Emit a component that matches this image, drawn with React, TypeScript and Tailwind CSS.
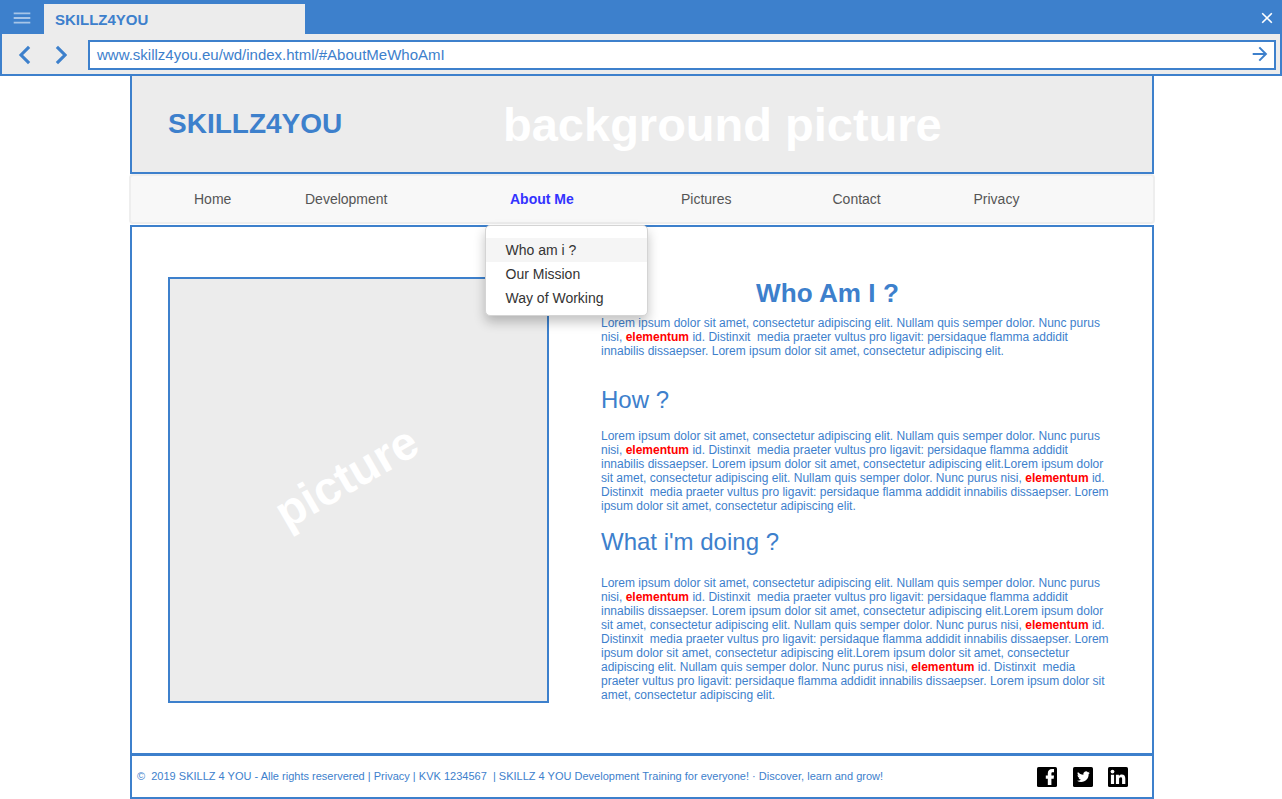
import React from "react";

const NAV = [
  { label: "Home", width: "w-[111px]" },
  { label: "Development", width: "w-[205px]" },
  { label: "About Me", width: "w-[171px]", active: true },
  { label: "Pictures", width: "w-[151.500px]" },
  { label: "Contact", width: "w-[141px]" },
  { label: "Privacy", width: "w-[100px]" },
];

const MENU = ["Who am i ?", "Our Mission", "Way of Working"];

const INTRO = [
  "Lorem ipsum dolor sit amet, consectetur adipiscing elit. Nullam quis semper dolor. Nunc purus",
  "nisi, *elementum* id. Distinxit  media praeter vultus pro ligavit: persidaque flamma addidit",
  "innabilis dissaepser. Lorem ipsum dolor sit amet, consectetur adipiscing elit.",
];

const HOW = [
  "Lorem ipsum dolor sit amet, consectetur adipiscing elit. Nullam quis semper dolor. Nunc purus",
  "nisi, *elementum* id. Distinxit  media praeter vultus pro ligavit: persidaque flamma addidit",
  "innabilis dissaepser. Lorem ipsum dolor sit amet, consectetur adipiscing elit.Lorem ipsum dolor",
  "sit amet, consectetur adipiscing elit. Nullam quis semper dolor. Nunc purus nisi, *elementum* id.",
  "Distinxit  media praeter vultus pro ligavit: persidaque flamma addidit innabilis dissaepser. Lorem",
  "ipsum dolor sit amet, consectetur adipiscing elit.",
];

const DOING = [
  ...HOW.slice(0, 5),
  "ipsum dolor sit amet, consectetur adipiscing elit.Lorem ipsum dolor sit amet, consectetur",
  "adipiscing elit. Nullam quis semper dolor. Nunc purus nisi, *elementum* id. Distinxit  media",
  "praeter vultus pro ligavit: persidaque flamma addidit innabilis dissaepser. Lorem ipsum dolor sit",
  "amet, consectetur adipiscing elit.",
];

function Paragraph({ lines }: { lines: string[] }) {
  return (
    <p className="whitespace-pre text-[12px] leading-[14px]">
      {lines.map((line, i) => (
        <span key={i} className="block">
          {line.split("*").map((part, j) =>
            j % 2 ? (
              <b key={j} className="font-bold text-[#ff0000]">{part}</b>
            ) : (
              <React.Fragment key={j}>{part}</React.Fragment>
            )
          )}
        </span>
      ))}
    </p>
  );
}

function BrowserBar() {
  return (
    <header className="h-[76px] bg-[#3d80cc]">
      <div className="flex h-[34px] items-end">
        <svg className="mb-[9px] ml-[13px] h-[14px] w-[18px]" viewBox="0 0 18 14" stroke="#a7c5e8" strokeWidth="1.8">
          <path d="M.7 2.4h16.6M.7 7h16.6M.7 11.6h16.6" />
        </svg>
        <div className="ml-[13px] h-[30px] w-[261px] bg-[#ececec] pl-[11px] text-[15px] leading-[32px] font-bold">
          SKILLZ4YOU
        </div>
        <svg className="mr-[9px] mb-[10px] ml-auto h-3 w-3" viewBox="0 0 12 12" fill="none" stroke="#fff" strokeWidth="1.6">
          <path d="M1.2 1.2l9.6 9.6M10.8 1.2l-9.6 9.6" />
        </svg>
      </div>
      <div className="mx-[2px] flex h-[40px] items-center bg-[#ececec] pt-[2px]">
        <svg className="ml-[16px] h-[20px] w-[13px]" viewBox="0 0 13 20" fill="none" stroke="#3d80cc" strokeWidth="3.1">
          <path d="M11.1 1.8L3 10l8.1 8.2" />
        </svg>
        <svg className="ml-[23px] h-[20px] w-[13px]" viewBox="0 0 13 20" fill="none" stroke="#3d80cc" strokeWidth="3.1">
          <path d="M2.9 1.8L11 10l-8.1 8.2" />
        </svg>
        <div className="ml-[21px] flex h-[30px] w-[1188px] items-center border-2 border-[#3d80cc] bg-white pl-[7px]">
          <span className="text-[15px] leading-[26px]">www.skillz4you.eu/wd/index.html/#AboutMeWhoAmI</span>
          <svg className="mr-[6px] mb-[2px] ml-auto h-4 w-4" viewBox="0 0 16 16" fill="none" stroke="#3d80cc" strokeWidth="2">
            <path d="M.7 8h13.2M7.3 1.4L13.9 8l-6.6 6.6" />
          </svg>
        </div>
      </div>
    </header>
  );
}

function DropDown() {
  return (
    <ul className="absolute top-[50.500px] left-[354.500px] z-10 h-[91px] w-[163px] rounded-[5px] border border-[#d4d4d4] bg-white pt-[12px] text-[14px] leading-[24px] text-[#333333] shadow-[0_6px_12px_rgba(0,0,0,0.24)]">
      {MENU.map((item, i) => (
        <li key={item} className={i === 0 ? "bg-[#f5f5f5] pl-[20px]" : "pl-[20px]"}>{item}</li>
      ))}
    </ul>
  );
}

function Social() {
  return (
    <div className="ml-auto flex">
      <svg className="mr-[16px] h-5 w-5" viewBox="0 0 20 20">
        <rect width="20" height="20" rx="1.6" />
        <path fill="#fff" d="M10.8 18v-6.300H8.800V8.400h2V6.600C10.800 3.600 12.400 2 15 2h2v3.300h-1.300c-.9 0-1.300.4-1.300 1.300v1.800H17l-.3 3.300h-2.300V18z" />
      </svg>
      <svg className="mr-[15px] h-5 w-5" viewBox="0 0 20 20">
        <rect width="20" height="20" rx="1.6" />
        <path fill="#fff" transform="translate(4 3.2) scale(.54)" d="M23.95 4.57a10 10 0 0 1-2.82.77 4.96 4.96 0 0 0 2.16-2.72c-.95.55-2 .95-3.13 1.18a4.92 4.92 0 0 0-8.38 4.48C7.69 8.1 4.07 6.13 1.64 3.16a4.92 4.92 0 0 0 1.52 6.57 4.9 4.9 0 0 1-2.23-.61v.06a4.92 4.92 0 0 0 3.95 4.83 5 5 0 0 1-2.21.08 4.94 4.94 0 0 0 4.6 3.42A9.87 9.87 0 0 1 0 19.54a13.99 13.99 0 0 0 7.55 2.21c9.05 0 14-7.5 14-13.99 0-.21 0-.42-.02-.63a9.94 9.94 0 0 0 2.46-2.55z" />
      </svg>
      <svg className="h-5 w-5" viewBox="0 0 20 20">
        <rect width="20" height="20" rx="1.6" />
        <g fill="#fff">
          <circle cx="4.5" cy="4.6" r="1.9" />
          <path d="M2.9 7.700h3.200V17H2.900zM7.900 7.700h3V9c.5-.8 1.500-1.500 2.900-1.500 2.500 0 3.500 1.500 3.500 4.200V17h-3.200v-4.900c0-1.200-.4-1.800-1.300-1.800-1.100 0-1.700.7-1.700 1.900V17H7.900z" />
        </g>
      </svg>
    </div>
  );
}

export default function App() {
  return (
    <div className="h-[799px] w-[1282px] overflow-hidden bg-white font-['Liberation_Sans',Arial,sans-serif] text-[#3d80cc]">
      <BrowserBar />
      <div className="ml-[130px] w-[1024px]">
        <section className="flex h-[98px] items-center border-x-2 border-b-2 border-[#3d80cc] bg-[#ececec] pl-[36px] font-bold whitespace-nowrap">
          <h1 className="w-[335px] text-[28px] leading-[32px]">SKILLZ4YOU</h1>
          <span className="pt-[2px] text-[47px] leading-[54px] text-white">background picture</span>
        </section>
        <nav className="relative h-[51px]">
          <ul className="-mx-px flex h-[50px] rounded-[4px] border-2 border-[#eeeeee] bg-[#f8f8f8] pl-[63px] text-[14px] leading-[46px] text-[#555555]">
            {NAV.map((n) => (
              <li key={n.label} className={`${n.width} ${n.active ? "font-bold text-[#3333ff]" : ""}`}>{n.label}</li>
            ))}
          </ul>
          <DropDown />
        </nav>
        <main className="flex h-[531px] border-x-2 border-y-2 border-b-3 border-[#3d80cc] pl-[36px]">
          <div className="mt-[50px] flex h-[426px] w-[381px] items-center justify-center border-2 border-[#3d80cc] bg-[#ececec]">
            <span className="mr-[24px] mb-[27px] -rotate-30 text-[47px] leading-[54px] font-bold text-white">picture</span>
          </div>
          <article className="ml-[52px] w-[520px] pt-[50px]">
            <h2 className="pl-[155px] text-[26.100px] leading-[32px] font-bold tracking-[0.04px]">Who Am I ?</h2>
            <div className="mt-[7px]"><Paragraph lines={INTRO} /></div>
            <h3 className="mt-[28px] text-[24px] leading-[28px]">How ?</h3>
            <div className="mt-[15px]"><Paragraph lines={HOW} /></div>
            <h3 className="mt-[15px] text-[24px] leading-[28px]">What i'm doing ?</h3>
            <div className="mt-[20px]"><Paragraph lines={DOING} /></div>
          </article>
        </main>
        <footer className="flex h-[43px] items-center border-x-2 border-b-2 border-[#3d80cc] pr-[24px] pl-[5px]">
          <span className="text-[11px] leading-[13px] tracking-[0.007px] whitespace-pre">
            {"©  2019 SKILLZ 4 YOU - Alle rights reservered | Privacy | KVK 1234567  | SKILLZ 4 YOU Development Training for everyone! · Discover, learn and grow!"}
          </span>
          <Social />
        </footer>
      </div>
    </div>
  );
}
